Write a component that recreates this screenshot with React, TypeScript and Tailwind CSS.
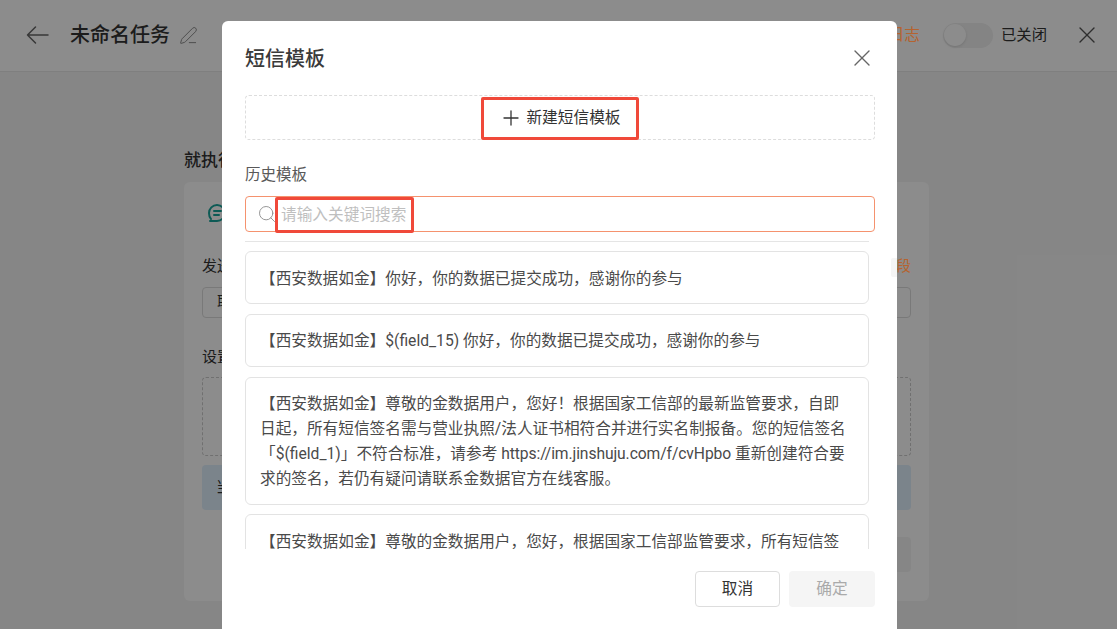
import React from "react";
import { X, Plus, Search, PenLine } from "lucide-react";

const font = { fontFamily: 'Roboto, "Noto Sans CJK SC", sans-serif' };

const Card = ({ children }: { children: React.ReactNode }) => (
  <div className="shrink-0 rounded-md border border-[#e3e3e3] px-[14px] pb-[12.8px] pt-[13.6px] text-[15.67px] leading-[25px] text-[#4a4a4a]">
    {children}
  </div>
);

export default function App() {
  return (
    <div style={font} className="relative h-[629px] w-[1117px] overflow-hidden bg-[#f5f5f5] text-[#333]">
      <header className="flex h-[72px] items-center border-b border-[#e8e8e8] bg-white pb-[1px] pl-[26px] pr-[16px]">
        <svg width="23" height="20" viewBox="0 0 23 20" fill="none" stroke="#666" strokeWidth="1.5" strokeLinecap="round" strokeLinejoin="round">
          <path d="M22 10H1.5M9.5 2 1.5 10l8 8" />
        </svg>
        <span className="ml-[21px] text-[20px] font-medium leading-none">未命名任务</span>
        <PenLine size={19} strokeWidth={1.2} className="ml-[9px] text-[#888]" />
        <span className="relative z-10 ml-auto text-[15.67px] text-[#b5632f]">日志</span>
        <span className="ml-[23px] flex h-[25px] w-[50px] items-center rounded-full bg-[#f0f0f0] pl-[1px]">
          <span className="h-[22px] w-[22px] rounded-full bg-white shadow" />
        </span>
        <span className="ml-[8px] text-[15.33px]">已关闭</span>
        <X size={28} strokeWidth={1.2} className="ml-[26px] text-[#555]" />
      </header>

      <main className="ml-[184px] w-[745px] pt-[76px]">
        <h2 className="text-[17px] font-medium leading-[24px]">就执行动作</h2>
        <section className="mt-[10px] h-[419px] rounded-md bg-white px-[18px] pt-[21px]">
          <svg width="20" height="20" viewBox="0 0 20 20" fill="none" stroke="#19a59b" strokeWidth="2" strokeLinecap="round" strokeLinejoin="round" className="ml-[5px]">
            <path d="M4 16C2.500 14.500 2 12 2 10a8 8 0 0 1 8-8 8 8 0 0 1 8 8 8 8 0 0 1-8 8H3" />
            <path d="M7 8h7M7 12h5" />
          </svg>
          <div className="mt-[32px] flex justify-between text-[15px] leading-[22px]">
            <span>发送</span>
            <span className="relative z-10 text-[#b5632f]">字段</span>
          </div>
          <div className="mt-[10px] h-[31px] rounded border border-[#ddd] px-[14px] text-[15px] leading-[29px]">取</div>
          <p className="mt-[28px] text-[15px] leading-[22px]">设置</p>
          <div className="mt-[9px] h-[79px] rounded border border-dashed border-[#ccc]" />
          <div className="mt-[9px] h-[45px] rounded bg-[#e0f0fd] px-[14px] text-[15px] leading-[45px]">当</div>
          <div className="ml-auto mt-[27px] h-[35px] w-[60px] rounded bg-[#f5f5f5]" />
        </section>
      </main>

      <div className="absolute inset-0 bg-black/45" />

      <div className="absolute left-[222px] top-[21px] z-20 flex h-[640px] w-[675px] flex-col rounded-md bg-white pl-[23px] pr-[21px]">
        <div className="flex h-[74px] items-center justify-between">
          <h1 className="pt-[1px] text-[20px] font-medium leading-none text-[#3a3a3a]">短信模板</h1>
          <X size={28} strokeWidth={1.2} className="mb-[1px] text-[#666]" />
        </div>
        <button className="flex h-[45px] w-[630px] items-center justify-center gap-[3px] rounded border border-dashed border-[#ddd] text-[15.7px] text-[#333]">
          <Plus size={24} strokeWidth={1.3} />
          新建短信模板
        </button>
        <p className="mt-[24px] text-[15.5px] leading-[22px] text-[#595959]">历史模板</p>
        <div className="mt-[10px] flex h-[36px] w-[630px] items-center gap-[4.5px] rounded border border-[#f5926e] pl-[10.5px]">
          <Search size={20} strokeWidth={1.1} className="text-[#8c8c8c]" />
          <span className="pt-[1px] text-[15.7px] text-[#bfbfbf]">请输入关键词搜索</span>
        </div>
        <div className="mt-[9px] flex h-[308px] w-[624px] flex-col gap-[9.4px] overflow-hidden border-t border-[#e5e5e5] pt-[9px]">
          <Card>【西安数据如金】你好，你的数据已提交成功，感谢你的参与</Card>
          <Card>【西安数据如金】$(field_15) 你好，你的数据已提交成功，感谢你的参与</Card>
          <Card>
            【西安数据如金】尊敬的金数据用户，您好！根据国家工信部的最新监管要求，自即日起，所有短信签名需与营业执照/法人证书相符合并进行实名制报备。您的短信签名「$(field_1)」不符合标准，请参考 <span className="tracking-[-0.1px]">https://im.jinshuju.com/f/cvHpbo</span> 重新创建符合要求的签名，若仍有疑问请联系金数据官方在线客服。
          </Card>
          <Card>【西安数据如金】尊敬的金数据用户，您好，根据国家工信部监管要求，所有短信签名需与营业执照/法人证书相符合并进行实名制报备。</Card>
        </div>
        <div className="mt-[22px] flex w-[630px] justify-end gap-[9px]">
          <button className="h-[36px] w-[85px] rounded border border-[#ddd] text-[15.7px] text-[#333]">取消</button>
          <button className="h-[36px] w-[86px] rounded bg-[#f5f5f5] text-[15.7px] text-[#aaa]">确定</button>
        </div>
      </div>

      <div className="absolute left-[891px] top-[258px] z-20 h-[19px] w-[6px] rounded-l-[2px] bg-[#f5f5f5]" />
      <div className="absolute left-[481px] top-[97px] z-20 h-[43px] w-[158px] rounded-[2px] border-[3px] border-[#f0493a]" />
      <div className="absolute left-[275px] top-[197px] z-20 h-[36px] w-[139px] rounded-[2px] border-[3px] border-[#f0493a]" />
    </div>
  );
}
